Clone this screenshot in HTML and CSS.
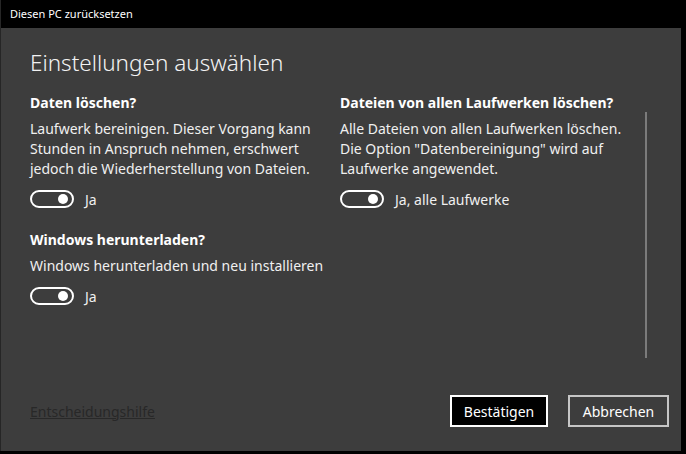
FILE: index.html
```html
<!DOCTYPE html>
<html lang="de">
<head>
<meta charset="utf-8">
<title>Diesen PC zurücksetzen</title>
<link rel="stylesheet" href="styles.css">
</head>
<body>
<div class="window">
  <div class="titlebar">Diesen PC zurücksetzen</div>
  <div class="content">
    <h1 class="heading">Einstellungen auswählen</h1>
    <div class="settings">
      <div class="col col-left">
        <div class="option">
          <div class="opt-title">Daten löschen?</div>
          <div class="opt-desc">Laufwerk bereinigen. Dieser Vorgang kann<br>Stunden in Anspruch nehmen, erschwert<br>jedoch die Wiederherstellung von Dateien.</div>
          <div class="toggle-row"><span class="toggle"><span class="knob"></span></span><span class="toggle-label">Ja</span></div>
        </div>
        <div class="option option-second">
          <div class="opt-title">Windows herunterladen?</div>
          <div class="opt-desc">Windows herunterladen und neu installieren</div>
          <div class="toggle-row"><span class="toggle"><span class="knob"></span></span><span class="toggle-label">Ja</span></div>
        </div>
      </div>
      <div class="col col-right">
        <div class="option">
          <div class="opt-title">Dateien von allen Laufwerken löschen?</div>
          <div class="opt-desc">Alle Dateien von allen Laufwerken löschen.<br>Die Option "Datenbereinigung" wird auf<br>Laufwerke angewendet.</div>
          <div class="toggle-row"><span class="toggle"><span class="knob"></span></span><span class="toggle-label">Ja, alle Laufwerke</span></div>
        </div>
      </div>
      <div class="scrollbar"></div>
    </div>
    <div class="footer">
      <a class="help-link">Entscheidungshilfe</a>
      <div class="buttons">
        <button class="btn btn-primary">Bestätigen</button>
        <button class="btn btn-secondary">Abbrechen</button>
      </div>
    </div>
  </div>
</div>
</body>
</html>
```
FILE: styles.css
```css
html, body {
  margin: 0;
  padding: 0;
  background: #000;
}
body {
  font-family: "Noto Sans", "Open Sans", sans-serif;
  color: #fff;
  width: 686px;
  height: 454px;
  overflow: hidden;
}
.window {
  width: 680px;
  height: 451px;
  background: #3d3d3d;
  border-left: 1px solid #262626;
  display: flex;
  flex-direction: column;
}
.titlebar {
  height: 28px;
  line-height: 28px;
  background: #000;
  color: #fff;
  font-size: 11px;
  padding-left: 9px;
}
.content {
  flex: 1;
  display: flex;
  flex-direction: column;
  padding: 0 12px 24px 29px;
}
.heading {
  margin: 19px 0 0 0;
  font-size: 22.5px;
  font-weight: 300;
  line-height: 32px;
  color: #f2f2f2;
}
.settings {
  display: flex;
  margin-top: 14px;
}
.col-left {
  width: 310px;
}
.col-right {
  flex: 1;
}
.opt-title {
  font-size: 14px;
  font-weight: 700;
  line-height: 20px;
  color: #fff;
}
.opt-desc {
  margin-top: 6px;
  font-size: 14px;
  line-height: 20px;
  color: #f0f0f0;
}
.option-second {
  margin-top: 22px;
}
.toggle-row {
  display: flex;
  align-items: center;
  margin-top: 11px;
  height: 18px;
}
.toggle {
  box-sizing: border-box;
  width: 44px;
  height: 18px;
  border: 2px solid #fff;
  border-radius: 9px;
  display: flex;
  align-items: center;
  justify-content: flex-end;
  padding-right: 4px;
}
.knob {
  width: 10px;
  height: 10px;
  border-radius: 50%;
  background: #fff;
}
.toggle-label {
  margin-left: 11px;
  font-size: 14px;
  color: #f0f0f0;
}
.scrollbar {
  width: 2px;
  height: 246px;
  margin-top: 19px;
  margin-right: 22px;
  background: #7b7b7b;
}
.footer {
  display: flex;
  justify-content: space-between;
  align-items: center;
  margin-top: auto;
}
.help-link {
  font-size: 14px;
  color: #282828;
  text-decoration: underline;
}
.buttons {
  display: flex;
  gap: 20px;
}
.btn {
  box-sizing: border-box;
  height: 32px;
  font-family: "Noto Sans", "Open Sans", sans-serif;
  font-size: 14px;
  color: #fff;
  padding: 0;
}
.btn-primary {
  width: 98px;
  background: #000;
  border: 2px solid #fff;
}
.btn-secondary {
  width: 101px;
  background: transparent;
  border: 2px solid #c6c6c6;
}
```
